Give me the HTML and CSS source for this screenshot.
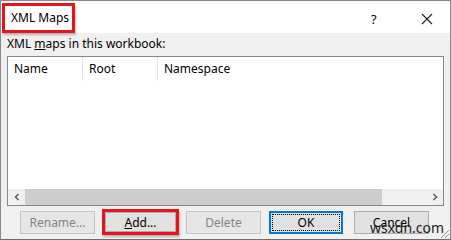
FILE: index.html
```html
<!DOCTYPE html>
<html>
<head>
    <title>XML Maps</title>
    <link rel="stylesheet" href="styles.css">
</head>
<body>
    <div class="dialog">
        <div class="titlebar">
            <span class="title mark">XML Maps</span>
            <span class="spacer"></span>
            <span class="help">?</span>
            <span class="close">
                <svg width="12" height="12" viewBox="0 0 12 12"><path d="M1 1L11 11M11 1L1 11" stroke="#222" stroke-width="1.1" fill="none"/></svg>
            </span>
        </div>
        <div class="content">
            <div class="label">XML <u>m</u>aps in this workbook:</div>
            <div class="listview">
                <div class="header">
                    <div class="col col-name">Name</div>
                    <div class="col col-root">Root</div>
                    <div class="col col-ns">Namespace</div>
                </div>
                <div class="rows"></div>
                <div class="hscroll">
                    <span class="arrow">
                        <svg width="8" height="8" viewBox="0 0 8 8"><path d="M5.5 1L2.5 4L5.5 7" stroke="#555" stroke-width="1.4" fill="none"/></svg>
                    </span>
                    <span class="thumb"></span>
                    <span class="track"></span>
                    <span class="arrow">
                        <svg width="8" height="8" viewBox="0 0 8 8"><path d="M2.5 1L5.5 4L2.5 7" stroke="#555" stroke-width="1.4" fill="none"/></svg>
                    </span>
                </div>
            </div>
            <div class="buttons">
                <button class="btn btn-rename" disabled>Rename...</button>
                <span class="mark add-mark"><button class="btn btn-add"><u>A</u>dd...</button></span>
                <button class="btn btn-delete" disabled>Delete</button>
                <button class="btn btn-ok"><span class="focus">OK</span></button>
                <button class="btn btn-cancel">Cancel</button>
            </div>
        </div>
        <div class="watermark">wsxdn.com</div>
        <svg class="grip" width="12" height="12" viewBox="0 0 12 12"><path d="M11 3L3 11M11 7L7 11" stroke="#999" stroke-width="1" fill="none"/></svg>
    </div>
</body>
</html>
```

FILE: styles.css
```css
body {
    margin: 0;
    font-family: "Noto Sans", "Open Sans", sans-serif;
    font-size: 12px;
    color: #000;
    background-color: #f0f0f0;
}
.dialog {
    position: relative;
    width: 451px;
    height: 240px;
    box-sizing: border-box;
    border: 1px solid #8a8a8a;
    border-bottom-color: #6d6d6d;
    background-color: #f0f0f0;
    overflow: hidden;
}
.titlebar {
    display: flex;
    align-items: flex-start;
    height: 32px;
    background-color: #fff;
}
.mark {
    border: 3px solid #e8141c;
    box-shadow: 1px 2px 2px rgba(0, 0, 0, 0.25);
}
.title {
    margin: 2px 0 0 1px;
    padding: 4px 3px 4px 6px;
    font-size: 12px;
    line-height: 16px;
}
.spacer {
    flex: 1;
}
.help {
    width: 14px;
    margin: 9px 36px 0 0;
    font-size: 13px;
}
.close {
    display: flex;
    margin: 12px 17px 0 0;
}
.content {
    padding: 3px 6px 0 6px;
}
.label {
    line-height: 16px;
    margin-bottom: 4px;
}
.listview {
    display: flex;
    flex-direction: column;
    height: 148px;
    border: 1px solid #828790;
    background-color: #fff;
}
.header {
    display: flex;
    height: 24px;
}
.col {
    padding: 4px 6px;
    line-height: 16px;
    border-right: 1px solid #e5e5e5;
}
.col-name {
    width: 62px;
}
.col-root {
    width: 62px;
}
.col-ns {
    border-right: none;
}
.rows {
    flex: 1;
}
.hscroll {
    display: flex;
    align-items: center;
    height: 16px;
    background-color: #f0f0f0;
}
.arrow {
    display: flex;
    justify-content: center;
    width: 17px;
}
.thumb {
    width: 357px;
    height: 16px;
    background-color: #cdcdcd;
}
.track {
    flex: 1;
}
.buttons {
    display: flex;
    align-items: center;
    gap: 8px;
    margin: 3px 0 0 13px;
}
.btn {
    height: 23px;
    width: 75px;
    padding: 0;
    font-family: inherit;
    font-size: 12px;
    color: #000;
    background-color: #e1e1e1;
    border: 1px solid #adadad;
}
.btn:disabled {
    color: #838383;
    background-color: #e6e6e6;
    border-color: #c4c4c4;
}
.add-mark {
    display: flex;
    margin: 0 -1px;
}
.btn-add {
    width: 71px;
    height: 20px;
}
.btn-ok {
    width: 74px;
    border: 2px solid #0078d7;
    padding: 1px;
}
.focus {
    display: block;
    height: 100%;
    box-sizing: border-box;
    border: 1px dotted #000;
    line-height: 15px;
}
.btn-cancel {
    margin-left: 3px;
}
.watermark {
    position: absolute;
    left: 369px;
    top: 217px;
    font-size: 14px;
    color: #222;
}
.grip {
    position: absolute;
    right: 0;
    bottom: 0;
}
```
